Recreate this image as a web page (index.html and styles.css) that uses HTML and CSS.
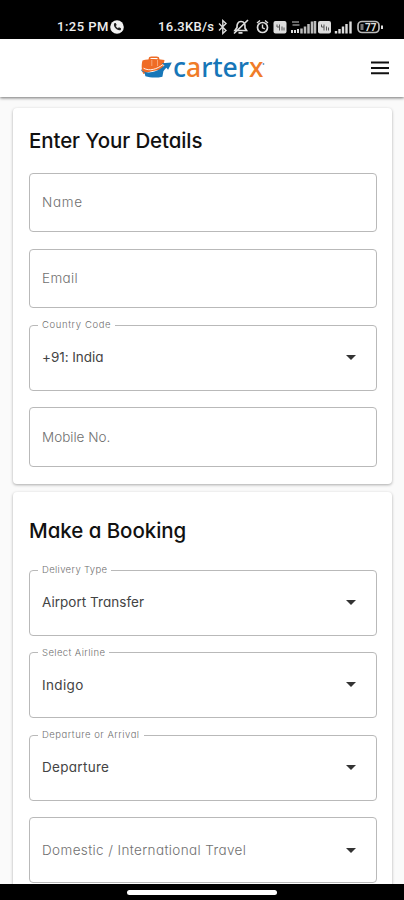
FILE: index.html
```html
<!DOCTYPE html>
<html lang="en">
<head>
<meta charset="utf-8">
<meta name="viewport" content="width=device-width, initial-scale=1">
<title>CarterX</title>
<link rel="stylesheet" href="styles.css">
</head>
<body>
<div class="screen">
  <div class="status">
    <span class="clock">1:25 PM</span>
    <svg class="phone" width="14" height="14" viewBox="0 0 14 14"><circle cx="7" cy="7" r="6.8" fill="#f2f2f2"/><path d="M4.2 3.2 5.7 3l1 2.1-.9 1c.5 1 1.1 1.6 2.1 2.1l1-.9 2.1 1-.2 1.6c-3.3 1.5-8.2-3.3-6.6-6.7Z" fill="#222"/></svg>
    <span class="speed">16.3KB/s</span>
    <svg class="icons" width="168" height="18" viewBox="216 18 168 18" fill="none" stroke="#ddd" stroke-width="1.4">
      <path d="m219 23.5 7 7-3.2 3V20.500l3.200 3-7 7"/>
      <path d="M235 30.500h11.500l-1.500-2.500c.4-3.500-.8-6.500-4-6.500s-4.200 3-4 6Zm3.500 2.300h4M234 33.500l14-13.500" stroke-width="1.700"/>
      <circle cx="262.500" cy="27.500" r="5" stroke-width="1.700"/><path d="M262.500 24.500v3.300l2.300 1M257 23l3-2.500M268 23l-3-2.500"/>
      <rect x="273.500" y="21" width="13" height="12.500" rx="2" fill="#ddd" stroke="none"/>
      <path d="M277 24.500v2.500h2.500v-2.500M279.500 27v3.500M282 30.500v-4M284 30.500v-3" stroke="#555" stroke-width="1"/>
      <path d="M292 22h7M292.500 25h7" stroke="#666" stroke-width="2"/>
      <path d="M292 33v-3M295 33v-3M298 33v-4" stroke-width="2"/>
      <path d="M301.500 33.500v-5M305 33.500v-7M308.500 33.500V24M312 33.500v-12M315 33.500V21" stroke-width="2.500" stroke="#bbb"/>
      <rect x="318" y="21" width="13" height="12.500" rx="2" fill="#ddd" stroke="none"/>
      <path d="M321.500 24.500v2.500h2.500v-2.500M324 27v3.500M326.500 30.500v-4M328.500 30.500v-3" stroke="#555" stroke-width="1"/>
      <path d="M336 33.500V31M339.500 33.500V29M343 33.500v-7M346.500 33.500V24M350.500 33.500v-12" stroke-width="2.400"/>
      <rect x="358" y="21.500" width="21" height="11" rx="4" stroke="#bbb" stroke-width="1.700"/><path d="M382 25.500v3.500" stroke-width="2"/><path d="M362 24v6" stroke="#777" stroke-width="3"/>
      <text x="365" y="30.800" font-family="Roboto, sans-serif" font-size="10" font-weight="700" fill="#ddd" stroke="none">77</text>
    </svg>
  </div>
  <header class="header">
    <svg class="logo" width="128" height="44" viewBox="139 47 128 44">
      <path d="M142.500 61.500c6-2 14-2 22-.5l-2 10c-7 0-13 1.500-19 4-2-3-2.300-9-1-13.500Z" fill="#ef6c26"/>
      <path d="M149.500 62v-2.500q0-1.300 2-1.300h5q2 0 2 1.300V62" fill="none" stroke="#ef6c26" stroke-width="1.600"/>
      <path d="M151.800 61v6M157.500 61v6" stroke="#f9b48c" stroke-width=".8"/>
      <path d="M141 70c1.500 4 9 4.300 15.500 1.800 4-1.500 6.500-4 8-5.600l-2.700-1.900 10-.8-3.700 7.200-1.700-1.900c-1.600 1.600-2.300 2.700-3 3.500l-1 5.400c-6 1.300-12 1-17-.4l-1-4c-2.600-.8-3.700-1.800-3.400-3.300Z" fill="#1676b8"/>
      <path d="M143.500 69.200c6 3.300 13.500 1 19.500-3.700" fill="none" stroke="#fff" stroke-width=".9"/>
      <text x="173" y="77.500" class="wordmark">c<tspan fill="#f07c28">a</tspan>rter<tspan fill="#f07c28">x</tspan></text>
      <circle cx="263.500" cy="65" r=".9" fill="#5b9bc8"/>
    </svg>
    <svg class="menu" width="20" height="16" viewBox="0 0 20 16"><path d="M1 2.500h18M1 8h18M1 13.300h18" stroke="#111" stroke-width="2"/></svg>
  </header>
  <main class="content">
    <section class="card details">
      <h2 class="t-details">Enter Your Details</h2>
      <div class="field"><span class="hint w-name">Name</span></div>
      <div class="field"><span class="hint w-email">Email</span></div>
      <fieldset class="field select"><legend class="l-country">Country Code</legend><span class="value w-india">+91: India</span><i class="caret"></i></fieldset>
      <div class="field mobile"><span class="hint w-mobile">Mobile No.</span></div>
    </section>
    <section class="card booking">
      <h2 class="t-booking">Make a Booking</h2>
      <fieldset class="field select"><legend class="l-delivery">Delivery Type</legend><span class="value w-airport">Airport Transfer</span><i class="caret"></i></fieldset>
      <fieldset class="field select"><legend class="l-airline">Select Airline</legend><span class="value w-indigo">Indigo</span><i class="caret"></i></fieldset>
      <fieldset class="field select"><legend class="l-arrival">Departure or Arrival</legend><span class="value w-departure">Departure</span><i class="caret"></i></fieldset>
      <div class="field travel"><span class="hint w-travel">Domestic / International Travel</span><i class="caret"></i></div>
    </section>
  </main>
  <div class="gesture"><div class="pill"></div></div>
</div>
</body>
</html>
```
FILE: styles.css
```css
* { box-sizing: border-box; }
body { margin: 0; overflow: hidden; background: #fafafa; font-family: Inter, "Open Sans", sans-serif; font-feature-settings: "cv11"; }
.screen { width: 404px; height: 900px; display: flex; flex-direction: column; overflow: hidden; }
.status { height: 39px; flex: none; background: #000; color: #eee; display: flex; align-items: center; padding: 15px 0 0 57px; font: 500 13px/16px Roboto, sans-serif; white-space: nowrap; }
.clock { width: 53px; letter-spacing: .5px; }
.phone { flex: none; }
.speed { width: 58px; margin-left: 34px; letter-spacing: .3px; }
.icons { flex: none; }
.header { height: 58px; flex: none; background: #fff; display: flex; align-items: center; padding-left: 139px; box-shadow: 0 1px 3px rgba(0,0,0,.55); z-index: 1; }
.logo { flex: none; }
.wordmark { font-family: "Noto Sans", sans-serif; font-size: 26.500px; font-weight: 500; fill: #1676b8; }
.menu { margin-left: 103px; }
.content { height: 787px; flex: none; padding: 11px 12px 0 13px; overflow: hidden; display: flex; flex-direction: column; gap: 8px; }
.card { flex: none; background: #fff; border-radius: 4px; padding: 0 15.500px 0 16px; box-shadow: 0 1px 3px rgba(0,0,0,.32); display: flex; flex-direction: column; }
.details { height: 376px; }
.booking { height: 420px; }
h2 { margin: 0; font-size: 20.500px; line-height: 30px; font-weight: 500; color: #111; white-space: nowrap; }
.details h2 { padding-top: 18px; height: 65px; }
.booking h2 { padding-top: 23.500px; height: 73px; }
.t-details { letter-spacing: -.1px; }
.t-booking { letter-spacing: -.05px; }
.field { position: relative; height: 59px; flex: none; min-width: 0; margin: 0 0 17px; border: 1px solid #b9b9b9; border-radius: 4px; padding: 0 20px 0 12px; display: flex; align-items: center; justify-content: space-between; font-size: 13.500px; white-space: nowrap; }
.hint { color: #707070; font-weight: 300; }
.value { color: #444; font-weight: 400; }
.select { height: 70.500px; padding: 19px 20px 0 8px; margin: -4.500px 0 16.500px; }
.booking .select { margin: 0 0 12px; }
.select legend { padding: 0 4px; font-size: 9.500px; line-height: 10px; height: 10px; font-weight: 300; color: #707070; }
.select .value { margin-left: 4px; }
.mobile { height: 60px; }
.travel { height: 66px; margin-top: 4.500px; }
.w-name { letter-spacing: .7px; }
.w-email { letter-spacing: .35px; }
.w-india { letter-spacing: -.05px; }
.w-mobile { letter-spacing: 0; }
.w-airport { letter-spacing: .03px; }
.w-indigo { letter-spacing: .35px; }
.w-departure { letter-spacing: .3px; }
.w-travel { letter-spacing: .38px; }
.l-country { letter-spacing: .6px; }
.l-delivery { letter-spacing: .35px; }
.l-airline { letter-spacing: .4px; }
.l-arrival { letter-spacing: .5px; }
.caret { width: 0; height: 0; border: 5px solid transparent; border-top-color: #333; border-bottom: 0; }
.gesture { height: 16px; flex: none; background: #000; display: flex; justify-content: center; padding-top: 6px; }
.pill { width: 150px; height: 5px; border-radius: 3px; background: #fff; }
```
